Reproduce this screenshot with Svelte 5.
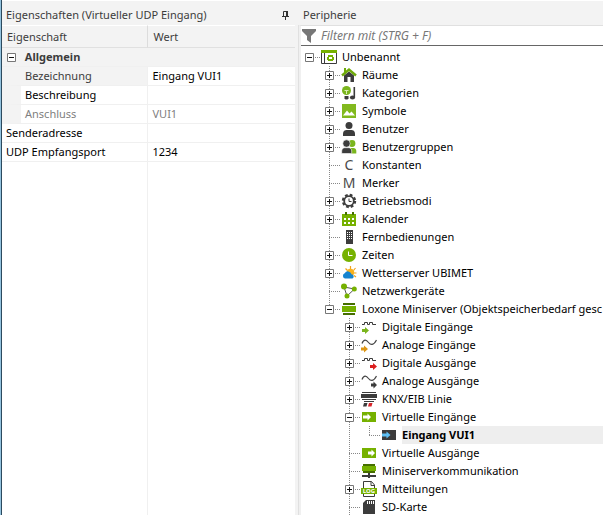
<script>
	let filter = $state('');
	let general = $state(true);
	let selected = $state('Eingang VUI1');

	let props = $state([
		{ name: 'Bezeichnung', value: 'Eingang VUI1', child: true, active: true },
		{ name: 'Beschreibung', value: '', child: true },
		{ name: 'Anschluss', value: 'VUI1', child: true, readonly: true },
		{ name: 'Senderadresse', value: '' },
		{ name: 'UDP Empfangsport', value: '1234' }
	]);

	let tree = $state([
		{
			label: 'Unbenannt', icon: 'project', open: true, children: [
				{ label: 'Räume', icon: 'house', children: [] },
				{ label: 'Kategorien', icon: 'category', children: [] },
				{ label: 'Symbole', icon: 'image', children: [] },
				{ label: 'Benutzer', icon: 'user', children: [] },
				{ label: 'Benutzergruppen', icon: 'users', children: [] },
				{ label: 'Konstanten', icon: 'c' },
				{ label: 'Merker', icon: 'm' },
				{ label: 'Betriebsmodi', icon: 'gear', children: [] },
				{ label: 'Kalender', icon: 'calendar', children: [] },
				{ label: 'Fernbedienungen', icon: 'remote' },
				{ label: 'Zeiten', icon: 'clock', children: [] },
				{ label: 'Wetterserver UBIMET', icon: 'weather', children: [] },
				{ label: 'Netzwerkgeräte', icon: 'network' },
				{
					label: 'Loxone Miniserver (Objektspeicherbedarf gesc', icon: 'miniserver', open: true, children: [
						{ label: 'Digitale Eingänge', icon: 'digitalIn', children: [] },
						{ label: 'Analoge Eingänge', icon: 'analogIn', children: [] },
						{ label: 'Digitale Ausgänge', icon: 'digitalOut', children: [] },
						{ label: 'Analoge Ausgänge', icon: 'analogOut', children: [] },
						{ label: 'KNX/EIB Linie', icon: 'knx', children: [] },
						{
							label: 'Virtuelle Eingänge', icon: 'virtualIn', open: true, children: [
								{ label: 'Eingang VUI1', icon: 'udp' }
							]
						},
						{ label: 'Virtuelle Ausgänge', icon: 'virtualOut' },
						{ label: 'Miniserverkommunikation', icon: 'comm' },
						{ label: 'Mitteilungen', icon: 'log', children: [] },
						{ label: 'SD-Karte', icon: 'sd', more: true }
					]
				}
			]
		}
	]);
</script>

{#snippet icon(name)}
	<svg class="icon" viewBox="0 0 16 16" aria-hidden="true">
		{#if name === 'project'}
			<path d="M.5 3v11.500h15V3M3.500 4v10" fill="none" stroke="#3c3c3c" />
			<path d="M0 1h16v3H0z" fill="#76b100" />
			<path d="M7 6h5v2h1v3h-1v1H7v-1H6V8h1z" fill="#76b100" />
			<path d="M8 8h3v2H8z" fill="#fff" />
		{:else if name === 'house'}
			<path d="M8 4.500L13 8.500V15H9.500v-5h-3v5H3V8.500z" fill="#3c3c3c" />
			<path d="M1 8.500L8 2.500l7 6" fill="none" stroke="#6faa0a" stroke-width="2.400" />
			<path d="M3 1h2v4H3z" fill="#6faa0a" />
		{:else if name === 'category'}
			<circle cx="5.500" cy="5.500" r="4.500" fill="#7ab51d" />
			<path d="M3.500 5.500h4M5.500 5.500V9" stroke="#d9efb4" fill="none" />
			<path d="M3.500 11h4v2.500l-1 1h-2l-1-1z" fill="#3c3c3c" />
			<path d="M13.300 2v10" stroke="#3c3c3c" stroke-width="1.600" />
			<ellipse cx="11.500" cy="12.500" rx="2.600" ry="2" fill="#3c3c3c" />
		{:else if name === 'image'}
			<path d="M1 1h14v14H1z" fill="#82b91e" />
			<path d="M2 12.500l4-5 2.500 3 2-2 3.500 4z" fill="#fff" />
		{:else if name === 'user'}
			<circle cx="8" cy="4.500" r="3.500" fill="#3c3c3c" />
			<path d="M2 15v-2.500C2 10 4 9 5.500 9h5c1.500 0 3.500 1 3.500 3.500V15z" fill="#3c3c3c" />
		{:else if name === 'users'}
			<circle cx="11" cy="4.500" r="3.400" fill="#7ab51d" />
			<path d="M9 14.500V9h3.500c1.500 0 2.800 1 2.800 3v2.500z" fill="#7ab51d" />
			<circle cx="5.500" cy="4.500" r="3.700" fill="#3c3c3c" stroke="#fff" stroke-width=".6" />
			<path d="M.7 14.500V12c0-2 1.500-3.300 3-3.300h4c1.500 0 3 1.300 3 3.300v2.500z" fill="#3c3c3c" stroke="#fff" stroke-width=".6" />
		{:else if name === 'c' || name === 'm'}
			<text x="8" y="13" font-size="14" text-anchor="middle" fill="#4a4a4a">{name.toUpperCase()}</text>
		{:else if name === 'gear'}
			<circle cx="8" cy="8" r="6" fill="none" stroke="#3c3c3c" stroke-width="2.400" stroke-dasharray="2.700 2.010" />
			<circle cx="8" cy="8" r="4.800" fill="#fff" stroke="#3c3c3c" stroke-width="1.800" />
			<path d="M8 5.500v3h2.500" fill="none" stroke="#3c3c3c" />
		{:else if name === 'calendar'}
			<path d="M1 3h14v12H1z" fill="#76b100" />
			<path d="M4 1h2v3H4zM11 1h2v3h-2z" fill="#466f00" />
			<path d="M3 7h2v2H3zM7 7h2v2H7zM11 7h2v2h-2zM3 11h2v2H3zM7 11h2v2H7zM11 11h2v2h-2z" fill="#fff" />
		{:else if name === 'remote'}
			<path d="M5 1h7v14H5z" fill="#3c3c3c" />
			<path d="M6 3h1v1H6zM8 3h1v1H8zM10 3h1v1h-1zM6 5h1v1H6zM8 5h1v1H8zM10 5h1v1h-1zM6 7h1v1H6zM8 7h1v1H8zM10 7h1v1h-1zM6 9h1v1H6zM8 9h1v1H8zM10 9h1v1h-1z" fill="#fff" />
		{:else if name === 'clock'}
			<circle cx="8" cy="8" r="7" fill="#76b100" />
			<path d="M7.500 4.500v4h4" fill="none" stroke="#fff" />
		{:else if name === 'weather'}
			<path d="M9.500 1v3M4.500 3.500l2 2M14.500 3l-2 2.500M15.500 8h-3M15 12l-2-1.500" stroke="#f3a21b" stroke-width="1.200" />
			<circle cx="9.500" cy="7.500" r="3.700" fill="#f9b21d" />
			<path d="M4 13.500a2.800 2.800 0 0 1-.3-5.300 3.700 3.700 0 0 1 6.800 1 2.300 2.300 0 0 1 1 4.300z" fill="#1684d0" />
		{:else if name === 'network'}
			<path d="M3 4l10.500 2L6 13z" fill="none" stroke="#555" />
			<circle cx="3" cy="3.500" r="3" fill="#76b100" />
			<circle cx="13.300" cy="6" r="2.500" fill="#76b100" />
			<circle cx="6" cy="13" r="2.500" fill="#76b100" />
		{:else if name === 'miniserver'}
			<path d="M2 2h12v2H2zM2 12h12v2H2z" fill="#466f00" />
			<path d="M1 5h14v6H1z" fill="#76b100" />
		{:else if name === 'digitalIn' || name === 'digitalOut'}
			<path d="M1 5.500h2.500v-2h3v2h2v-2h3v2H15" fill="none" stroke="#3c3c3c" />
			{#if name === 'digitalIn'}
				<path d="M1 10h3V8l4 3.500L4 15v-2H1z" fill="#7ab51d" />
			{:else}
				<path d="M9 10h3V8l4 3.500-4 3.500v-2H9z" fill="#dc1f1f" />
			{/if}
		{:else if name === 'analogIn' || name === 'analogOut'}
			<path d="M1 6.500C3 1.500 5.500 3 7.500 5.500S12.500 9 15.500 3" fill="none" stroke="#444" stroke-width="1.200" />
			{#if name === 'analogIn'}
				<path d="M0 10.500h3v-2L7 12l-4 3.500v-2H0z" fill="#dd9614" />
			{:else}
				<path d="M10 10.500h2.500v-2L16 12l-3.500 3.500v-2H10z" fill="#3c3c3c" />
			{/if}
		{:else if name === 'knx'}
			<path d="M1 1h14v1H1zM0 3h16v4H0zM1 8h14v1H1zM3 10h10v1H3z" fill="#3c3c3c" />
			<path d="M3 12h3.500l-1 3.500H2z" fill="#3c3c3c" />
			<path d="M8 12h3.500l-1 3.500H7z" fill="#d8242a" />
		{:else if name === 'virtualIn' || name === 'virtualOut'}
			<path d="M1 3h14v10H1z" fill="#76b100" />
			{#if name === 'virtualIn'}
				<path d="M2 6.500h4.500V4.500L10 8l-3.500 3.500v-2H2z" fill="#fff" />
			{:else}
				<path d="M7 6.500h3.500V4.500L14 8l-3.500 3.500v-2H7z" fill="#fff" />
			{/if}
		{:else if name === 'udp'}
			<path d="M1 3h14v10H1z" fill="#3c3c3c" />
			<path d="M1 6.500h4.500V4.500L9.500 8l-4 3.500v-2H1z" fill="#5fc0f5" />
		{:else if name === 'comm'}
			<path d="M2 1h12v2H2zM2 8h12v2H2z" fill="#466f00" />
			<path d="M1 3h14v5H1z" fill="#76b100" />
			<path d="M7 10h2v2H7zM1 12h14v2H9v1H7v-1H1z" fill="#3c3c3c" />
		{:else if name === 'log'}
			<path d="M2.500 15.500V.5h8l3 3.500v11.500zM10 .5v4h3.500" fill="#fff" stroke="#3c3c3c" />
			<path d="M0 7h16v6H0z" fill="#76b100" />
			<text x="8" y="12" font-size="6" font-weight="700" text-anchor="middle" fill="#fff">LOG</text>
		{:else if name === 'sd'}
			<path d="M5 1h9v14H2V4z" fill="#3c3c3c" />
			<path d="M6 2h1v3H6zM8 2h1v3H8zM10 2h1v3h-1zM12 2h1v3h-1z" fill="#fff" />
		{/if}
	</svg>
{/snippet}

{#snippet toggle(open)}
	<svg viewBox="0 0 9 9" aria-hidden="true">
		<path d="M.5.5h8v8h-8z" fill="#fff" stroke="#777" />
		<path d={open ? 'M2 4.500h5' : 'M2 4.500h5M4.500 2v5'} stroke="#111" />
	</svg>
{/snippet}

{#snippet branch(nodes, depth)}
	<ul role={depth === 0 ? 'tree' : 'group'}>
		{#each nodes as node, i}
			<li
				role="treeitem"
				aria-expanded={node.children ? !!node.open : undefined}
				aria-selected={selected === node.label}
				class:last={i === nodes.length - 1 && !node.more}
				class:root={depth === 0}
			>
				<div class="row">
					<span class="join">
						{#if node.children}
							<button class="toggle" aria-label={node.label} onclick={() => (node.open = !node.open)}>
								{@render toggle(node.open)}
							</button>
						{/if}
					</span>
					{@render icon(node.icon)}
					<button class="label" class:selected={selected === node.label} onclick={() => (selected = node.label)}>
						{node.label}
					</button>
				</div>
				{#if node.open && node.children.length}
					{@render branch(node.children, depth + 1)}
				{/if}
			</li>
		{/each}
	</ul>
{/snippet}

<div class="app">
	<section class="properties">
		<header>
			<h2>Eigenschaften (Virtueller UDP Eingang)</h2>
			<button class="pin" aria-label="Anheften">
				<svg viewBox="0 0 7 9" aria-hidden="true">
					<path d="M1.500 5V.5h4V5M0 5.500h7M3.500 6v3" fill="none" stroke="#333" />
					<path d="M4 0h2v5H4z" fill="#333" />
				</svg>
			</button>
		</header>
		<div class="sheet">
			<table>
				<thead>
					<tr>
						<th>Eigenschaft</th>
						<th>Wert</th>
					</tr>
				</thead>
				<tbody>
					<tr class="group">
						<th colspan="2">
							<button class="toggle" aria-label="Allgemein" onclick={() => (general = !general)}>
								{@render toggle(general)}
							</button>
							Allgemein
						</th>
					</tr>
					{#each props as p}
						{#if general || !p.child}
							<tr class:child={p.child} class:active={p.active} class:readonly={p.readonly}>
								<td>{p.name}</td>
								<td><input aria-label={p.name} bind:value={p.value} readonly={p.readonly}></td>
							</tr>
						{/if}
					{/each}
					<tr class="rest"><td></td><td></td></tr>
				</tbody>
			</table>
		</div>
	</section>

	<section class="periphery">
		<header>
			<h2>Peripherie</h2>
		</header>
		<div class="panel">
			<label class="filter">
				<svg viewBox="0 0 14 14" aria-hidden="true">
					<path d="M0 0h14v2L9 7v7l-4-3V7L0 2z" fill="#777" />
				</svg>
				<input placeholder="Filtern mit (STRG + F)" aria-label="Filter" bind:value={filter}>
			</label>
			{@render branch(tree, 0)}
		</div>
	</section>
</div>

<style>
	:global(body) {
		margin: 0;
	}

	.app {
		display: flex;
		height: 100vh;
		overflow: hidden;
		box-sizing: border-box;
		border-left: 1px solid #93c2de;
		background: #f3f3f3;
		font-family: 'Noto Sans', 'Open Sans', sans-serif;
		font-size: 11px;
		color: #000;
	}

	button, input {
		font: inherit;
		color: inherit;
		border: 0;
		padding: 0;
		background: none;
		outline: 0;
	}

	section {
		display: flex;
		flex-direction: column;
		box-sizing: border-box;
		min-width: 0;
	}

	.properties {
		flex: 0 0 49.5%;
		border-left: 1px solid #2c4a5e;
	}

	.periphery {
		flex: 1;
	}

	header {
		display: flex;
		align-items: center;
		justify-content: space-between;
		box-sizing: border-box;
		height: 25px;
		padding: 4px 10px 0 4px;
		border-top: 1px solid #fff;
		flex: none;
	}

	h2 {
		margin: 0;
		font-size: 11px;
		font-weight: 400;
		line-height: 18px;
		color: #3c3c3c;
	}

	.pin svg {
		display: block;
		width: 7px;
		height: 9px;
	}

	/* property sheet */
	.sheet {
		flex: 1;
		display: flex;
		margin-right: 4px;
		background: #fff;
	}

	table {
		width: 100%;
		height: 100%;
		table-layout: fixed;
		border-collapse: separate;
		border-spacing: 0;
	}

	th, td {
		box-sizing: border-box;
		height: 19px;
		padding: 0 4px;
		line-height: 18px;
		text-align: left;
		font-weight: 400;
		white-space: nowrap;
		border-bottom: 1px solid #f0f0f0;
	}

	td:first-child {
		border-right: 1px solid #f0f0f0;
	}

	thead th {
		height: 23px;
		padding: 0 5px;
		background: #f3f3f3;
		color: #3c3c3c;
		border-top: 1px solid #fff;
		border-bottom: 1px solid #e0e0e0;
	}

	thead th:first-child {
		border-right: 1px solid #dcdcdc;
	}

	.group th {
		background: #f3f3f3;
		color: #3c3c3c;
		font-weight: 700;
		padding-left: 5px;
	}

	.group .toggle {
		margin-right: 6px;
		vertical-align: -1px;
	}

	.child td:first-child {
		border-left: 19px solid #f3f3f3;
	}

	.active td:first-child {
		background: #f3f3f3;
		color: #3c3c3c;
	}

	.readonly td {
		color: #808080;
	}

	.rest td {
		height: auto;
		border-bottom: 0;
	}

	td input {
		display: block;
		width: 100%;
		height: 18px;
	}

	.toggle {
		flex: none;
		width: 9px;
		height: 9px;
	}

	.toggle svg {
		display: block;
		width: 9px;
		height: 9px;
	}

	/* periphery tree */
	.panel {
		flex: 1;
		min-height: 0;
		overflow: hidden;
		background: #fff;
		border-top: 1px solid #e0e0e0;
		border-left: 2px solid #f0f0f0;
		box-shadow: -1px 0 #e0e0e0;
	}

	.filter {
		display: flex;
		align-items: center;
		gap: 5px;
		height: 19px;
		padding-left: 1px;
		border-bottom: 1px solid #666;
		margin-bottom: 2px;
	}

	.filter svg {
		flex: none;
		width: 14px;
		height: 14px;
	}

	.filter input {
		flex: 1;
		min-width: 0;
		font-size: 12px;
		font-style: italic;
	}

	.filter input::placeholder {
		color: #777;
		opacity: 1;
	}

	ul {
		margin: 0;
		padding: 0;
		list-style: none;
	}

	ul ul {
		padding-left: 20px;
	}

	li {
		position: relative;
	}

	li::before {
		content: '';
		position: absolute;
		top: 0;
		bottom: 0;
		left: 8px;
		width: 1px;
		background: repeating-linear-gradient(#888 0 1px, transparent 1px 2px);
	}

	li.last::before {
		bottom: auto;
		height: 9px;
	}

	li.root::before {
		display: none;
	}

	.row {
		position: relative;
		display: flex;
		align-items: center;
		height: 18px;
	}

	.join {
		display: flex;
		align-items: center;
		box-sizing: border-box;
		width: 20px;
		height: 9px;
		padding-left: 4px;
		flex: none;
		background: repeating-linear-gradient(90deg, #888 0 1px, transparent 1px 2px) 8px 4px / 11px 1px no-repeat;
	}

	.icon {
		flex: none;
		width: 16px;
		height: 16px;
		margin-right: 5px;
	}

	.label {
		height: 18px;
		line-height: 18px;
		white-space: nowrap;
		text-align: left;
	}

	.label.selected {
		flex: 1;
		background: #eee;
		font-weight: 700;
	}
</style>
